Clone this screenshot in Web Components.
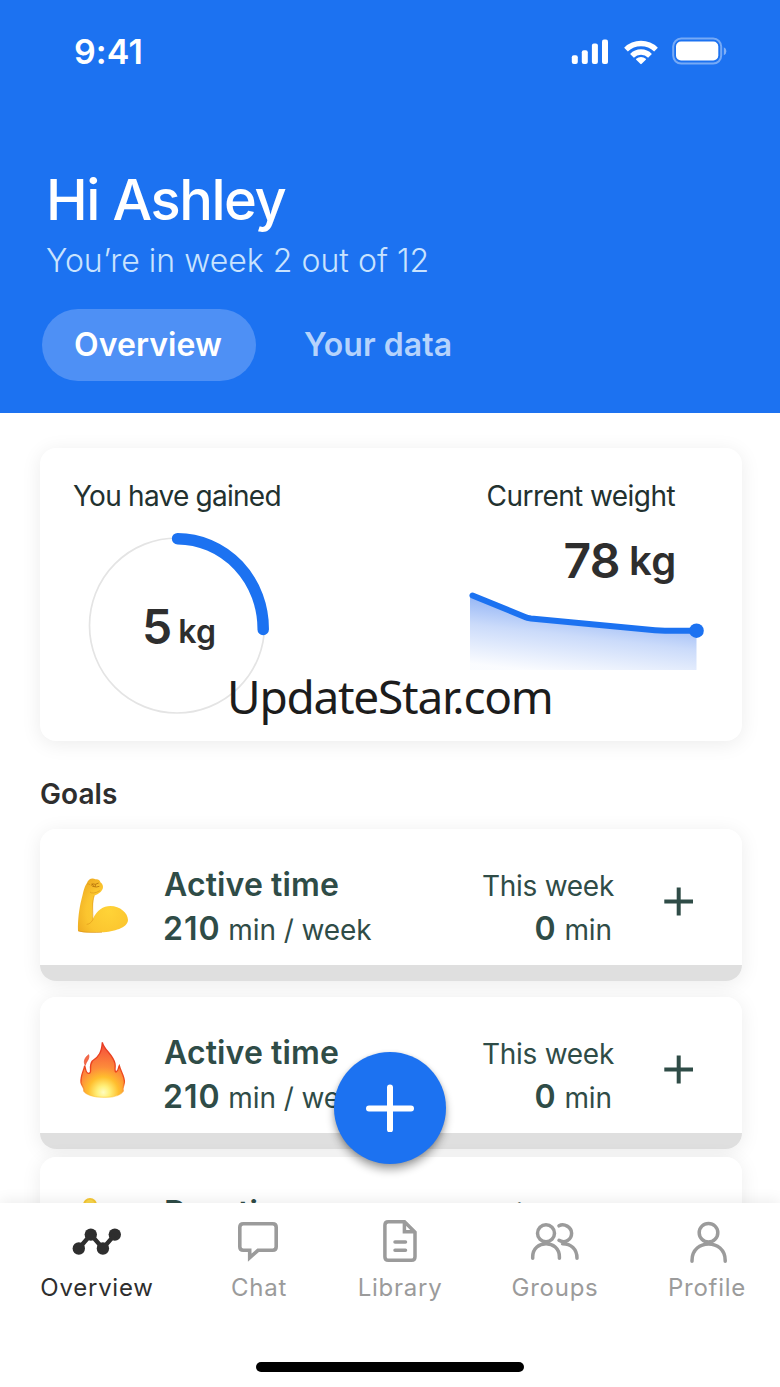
<!DOCTYPE html>
<html lang="en">
<head>
<meta charset="utf-8">
<title>Overview</title>
<style>
  html, body { margin: 0; background: #fff; }
  body { font-family: Inter, "Liberation Sans", sans-serif; overflow: hidden; }
</style>
</head>
<body>
<app-shell>
  <app-header slot="header" name="Hi Ashley" note="You’re in week 2 out of 12">
    <status-bar slot="status" time="9:41"></status-bar>
    <pill-tab active>Overview</pill-tab>
    <pill-tab>Your data</pill-tab>
  </app-header>
  <summary-card>
    <progress-ring slot="left" label="You have gained" value="5" unit="kg"></progress-ring>
    <weight-trend slot="right" label="Current weight" value="78" unit="kg"></weight-trend>
    <span slot="mark">UpdateStar.com</span>
  </summary-card>
  <goal-list heading="Goals">
    <goal-card name="Active time"><emoji-icon slot="icon" kind="arm"></emoji-icon></goal-card>
    <goal-card name="Active time"><emoji-icon slot="icon" kind="fire"></emoji-icon></goal-card>
    <goal-card name="Duration" class="tight"><emoji-icon slot="icon" kind="ball"></emoji-icon></goal-card>
  </goal-list>
  <add-button slot="float"></add-button>
  <nav-bar slot="nav">
    <nav-item icon="overview" active>Overview</nav-item>
    <nav-item icon="chat">Chat</nav-item>
    <nav-item icon="library">Library</nav-item>
    <nav-item icon="groups">Groups</nav-item>
    <nav-item icon="profile">Profile</nav-item>
  </nav-bar>
</app-shell>

<script>
const define = (tag, render) => customElements.define(tag, class extends HTMLElement {
  constructor() {
    super();
    this.attachShadow({ mode: 'open' });
  }
  connectedCallback() {
    this.shadowRoot.innerHTML = render(name => this.getAttribute(name) || '');
  }
});

define('app-shell', () => `
<style>
  :host { display: grid; grid-template-rows: 413px minmax(0, 1fr) 184px; width: 780px; height: 1387px; position: relative; overflow: hidden; background: #fff; }
  main { overflow: hidden; padding: 35px 38px 0 40px; }
  ::slotted([slot=float]) { position: absolute; left: 334px; top: 1051.5px; z-index: 3; }
</style>
<slot name="header"></slot>
<main><slot></slot></main>
<slot name="nav"></slot>
<slot name="float"></slot>`);

define('app-header', a => `
<style>
  :host { display: flex; flex-direction: column; background: #1c72f1; color: #fff; }
  h1 { margin: 63px 0 0 46px; font: 500 56px/68px Inter, sans-serif; letter-spacing: -1.44px; }
  p { margin: 7px 0 0 46px; font-size: 32px; font-weight: 300; line-height: 40px; color: #c9e3fe; letter-spacing: .02px; white-space: nowrap; }
  nav { display: flex; gap: 16px; margin: 28px 0 0 42px; }
</style>
<slot name="status"></slot>
<h1>${a('name')}</h1>
<p>${a('note')}</p>
<nav><slot></slot></nav>`);

define('status-bar', a => `
<style>
  :host { display: flex; justify-content: space-between; align-items: flex-start; height: 103px; box-sizing: border-box; padding: 32px 52px 0 74px; }
  time { font-size: 34px; font-weight: 600; line-height: 40px; letter-spacing: .1px; }
  svg { display: block; margin-top: 3px; }
</style>
<time>${a('time')}</time>
<svg width="158" height="32" viewBox="0 0 158 32" fill="#fff">
  <rect x="1.800" y="20.200" width="6" height="8.800" rx="2"/>
  <rect x="11.800" y="15.200" width="6" height="13.800" rx="2"/>
  <rect x="21.900" y="8.400" width="6" height="20.600" rx="2"/>
  <rect x="32" y="4.400" width="6" height="24.600" rx="2"/>
  <g fill="none" stroke="#fff" stroke-width="5.300">
    <path d="M56 14.600A21.500 21.500 0 0 1 86 14.600"/>
    <path d="M62 20.800A12.600 12.600 0 0 1 80 20.800"/>
  </g>
  <path d="M66.200 23.700a7.400 7.400 0 0 1 9.600 0q.5.5 0 1.100l-4.100 4q-.7.700-1.400 0l-4.100-4q-.5-.6 0-1.100Z"/>
  <rect x="103.200" y="3.600" width="48" height="25" rx="8" fill="none" stroke="#fff" stroke-opacity=".4" stroke-width="2"/>
  <rect x="106" y="6.500" width="42.300" height="18.900" rx="5"/>
  <path d="M153.800 12.200v8q2.600-1.200 2.600-4t-2.600-4Z" opacity=".45"/>
</svg>`);

define('pill-tab', () => `
<style>
  :host { display: block; height: 72px; border-radius: 36px; padding: 0 32px; font-size: 32px; font-weight: 600; line-height: 72px; white-space: nowrap; color: #b5d3fc; letter-spacing: .06px; box-sizing: border-box; min-width: 214px; }
  :host([active]) { background: #4e90f5; color: #fff; }
</style>
<slot></slot>`);

define('summary-card', () => `
<style>
  :host { display: flex; justify-content: space-between; position: relative; height: 293px; box-sizing: border-box; padding: 30px 35px 0 33px; border-radius: 16px; background: #fff; box-shadow: 0 3px 20px rgba(0,0,0,.08); }
  ::slotted([slot=mark]) { position: absolute; left: 187px; top: 218px; font: 400 46px/60px "Noto Sans", sans-serif; letter-spacing: -1.25px; color: #1c1c1c; white-space: nowrap; }
</style>
<slot name="left"></slot>
<slot name="right"></slot>
<slot name="mark"></slot>`);

define('progress-ring', a => `
<style>
  :host { display: block; color: #2e2e2e; }
  .label { font-size: 28px; line-height: 36px; letter-spacing: -.75px; color: #22312f; white-space: nowrap; }
  .ring { display: grid; margin: 18px 0 0 11px; width: 190px; height: 190px; }
  svg, .num { grid-area: 1 / 1; }
  .num { margin: 65px 0 0 58px; font-size: 48px; line-height: 60px; font-weight: 600; white-space: nowrap; }
  small { font-size: 32px; line-height: 40px; margin-left: 6px; letter-spacing: .4px; vertical-align: 1px; }
</style>
<div class="label">${a('label')}</div>
<div class="ring">
  <svg width="190" height="190" viewBox="0 0 190 190" fill="none">
    <circle cx="93" cy="93.500" r="87.500" stroke="#e4e4e4" stroke-width="1.700"/>
    <path d="M93.600 6.700A86 90 0 0 1 179.200 97.500" stroke="#1c72f1" stroke-width="11.500" stroke-linecap="round"/>
  </svg>
  <div class="num">${a('value')}<small>${a('unit')}</small></div>
</div>`);

define('weight-trend', a => `
<style>
  :host { display: flex; flex-direction: column; align-items: flex-end; width: 242px; color: #2e2e2e; }
  .label { font-size: 28px; line-height: 36px; letter-spacing: -.57px; margin-right: 32px; color: #22312f; white-space: nowrap; }
  .num { margin: 17px 30px 0 0; font-size: 48px; line-height: 60px; font-weight: 600; letter-spacing: -.6px; white-space: nowrap; }
  small { font-size: 40px; line-height: 40px; margin-left: 9px; letter-spacing: .6px; vertical-align: 3px; }
  svg { display: block; margin-top: -3px; }
</style>
<div class="label">${a('label')}</div>
<div class="num">${a('value')}<small>${a('unit')}</small></div>
<svg width="242" height="87" viewBox="0 0 242 87">
  <defs><linearGradient id="g" gradientUnits="userSpaceOnUse" x1="105" y1="8" x2="96" y2="86">
    <stop offset="0" stop-color="#1c62ea" stop-opacity=".56"/>
    <stop offset=".5" stop-color="#1c62ea" stop-opacity=".23"/>
    <stop offset="1" stop-color="#1c62ea" stop-opacity=".02"/>
  </linearGradient></defs>
  <path d="M5 7.500L63 30.500L196 42.500H231.500V82H5Z" fill="url(#g)"/>
  <path d="M7.500 7.500L60 29Q62 30 66 30.500L190 42.300Q196 42.800 202 42.700H231" fill="none" stroke="#1c72f1" stroke-width="6" stroke-linecap="round"/>
  <circle cx="231.500" cy="42.700" r="7.300" fill="#1c72f1"/>
</svg>`);

define('goal-list', a => `
<style>
  :host { display: flex; flex-direction: column; }
  h2 { margin: 35px 0 17px; font-size: 28px; line-height: 36px; font-weight: 600; letter-spacing: .07px; color: #2e2e2e; }
  .rows { display: flex; flex-direction: column; gap: 16px; }
  ::slotted(.tight) { margin-top: -8px; }
</style>
<h2>${a('heading')}</h2>
<div class="rows"><slot></slot></div>`);

define('goal-card', a => `
<style>
  :host { display: grid; grid-template-columns: 94px 1fr auto 30px; height: 152px; flex: none; box-sizing: border-box; padding: 36px 48px 0 30px; border-radius: 16px; background: linear-gradient(#fff 136px, #dfdfdf 136px); box-shadow: 0 3px 20px rgba(0,0,0,.08); color: #2f4c47; white-space: nowrap; }
  .name { margin-left: 1px; font-size: 32px; font-weight: 600; line-height: 40px; letter-spacing: .12px; }
  .amount { margin-top: 2px; font-size: 28px; line-height: 44px; letter-spacing: -.1px; }
  b { font-size: 32px; font-weight: 600; letter-spacing: 1px; }
  .info { margin-left: -1px; }
  .week { text-align: right; margin-right: 50px; }
  .title { font-size: 28px; line-height: 40px; letter-spacing: -.27px; padding-top: 1px; }
  .week .amount { margin: 1px 2px 0 0; }
  .plus { margin-top: 21px; }
  .icon { margin-top: 5px; }
</style>
<div class="icon"><slot name="icon"></slot></div>
<div class="info"><div class="name">${a('name')}</div><div class="amount"><b>210</b> min / week</div></div>
<div class="week"><div class="title">This week</div><div class="amount"><b>0</b> min</div></div>
<svg class="plus" width="30" height="30" viewBox="0 0 30 30" stroke="#2f4c47" stroke-width="4" fill="none"><path d="M.3 15.500H29M14.700 1.500V29.500"/></svg>`);

const EMOJI = {
  arm: `<defs><radialGradient id="a" cx=".62" cy=".6" r=".7"><stop offset="0" stop-color="#ffd337"/><stop offset=".65" stop-color="#fbc52f"/><stop offset="1" stop-color="#efad22"/></radialGradient></defs>
    <path d="M24 183C23 150 28 112 34 90C39 72 42 50 50 41C54 26 68 22 76 28C86 27 91 32 91 37C100 42 101 55 96 60C92 68 80 75 73 77C68 92 68 122 69 146C80 121 100 108 121 108C150 108 174 129 174 150C173 174 132 185 95 187C62 188 38 189 24 183Z" fill="url(#a)"/>
    <path d="M73 77C65 96 69 125 69 148C65 158 56 163 50 163M25 183C45 188 75 188 96 187" fill="none" stroke="#d78b13" stroke-width="2.500" opacity=".6"/>
    <path d="M63 46q7-7 13-3l10-4M67 49l12 2 9-2M66 40l5 9M77 43l-2 8" fill="none" stroke="#b6720c" stroke-width="2.500"/>
    <path d="M50 42q6-2 11 3M60 66q8 8 30-4" fill="none" stroke="#cf8b15" stroke-width="2.500" opacity=".6"/>`,
  fire: `<defs><radialGradient id="f" gradientUnits="userSpaceOnUse" cx="97" cy="172" r="135"><stop offset="0" stop-color="#fffcc0"/><stop offset=".14" stop-color="#fff07a"/><stop offset=".34" stop-color="#ffbe2e"/><stop offset=".56" stop-color="#fd8b3a"/><stop offset="1" stop-color="#f5553b"/></radialGradient><linearGradient id="r" x1="0" x2="0" y1="0" y2="1"><stop offset="0" stop-color="#e63b22"/><stop offset=".7" stop-color="#ee4a1d"/><stop offset="1" stop-color="#ffc933" stop-opacity=".5"/></linearGradient></defs>
    <path d="M94 22C98 44 126 58 132 86C134 98 129 110 135 111C143 109 141 98 145 92C148 108 162 124 160 143C158 156 154 158 157 168C150 180 128 188 98 187C68 187 46 180 38 168C42 162 32 153 30 143C28 120 40 104 41 92C45 103 43 116 54 115C66 112 51 96 64 78C84 66 92 51 94 22Z" fill="url(#f)" stroke="url(#r)" stroke-width="4"/>
    <path d="M53 59C57 72 45 80 43 91C36 79 42 67 53 59Z" fill="#f46b45" stroke="#e94a30" stroke-width="2"/>`,
  ball: `<circle cx="60" cy="21" r="21" fill="#f6c834"/><circle cx="60" cy="19" r="14" fill="#fbd84d"/>`
};
define('emoji-icon', a => `
<style>
  :host { display: block; width: 64px; height: 70px; }
  :host([kind=fire]) { margin: -3px 0 0 1px; }
  svg { display: block; overflow: visible; }
</style>
<svg width="64" height="70" viewBox="0 0 192 210">${EMOJI[a('kind')]}</svg>`);

define('add-button', () => `
<style>
  :host { display: grid; place-items: center; width: 112px; height: 112px; border-radius: 50%; background: #1c72f1; box-shadow: 0 6px 9px rgba(0,0,0,.32), 0 1px 4px rgba(0,0,0,.14); }
</style>
<svg width="48" height="48" viewBox="0 0 48 48" stroke="#fff" stroke-width="6" stroke-linecap="round"><path d="M3 24.500H45M24 3.500V45.500"/></svg>`);

define('nav-bar', () => `
<style>
  :host { display: flex; flex-direction: column; justify-content: space-between; position: relative; z-index: 2; background: #fff; box-shadow: 0 -2px 14px rgba(0,0,0,.08); box-sizing: border-box; padding: 15px 0; }
  .items { display: grid; grid-template-columns: 162px 162px 120px 190px 114px; margin-left: 16px; }
  .home { width: 268px; height: 10.500px; border-radius: 6px; background: #000; align-self: center; }
</style>
<div class="items"><slot></slot></div>
<div class="home"></div>`);

const NAV = {
  overview: `<g fill="currentColor" stroke="none"><circle cx="9.800" cy="30.500" r="6.200"/><circle cx="21.800" cy="16.600" r="6.200"/><circle cx="33.900" cy="30.500" r="6.200"/><circle cx="45.800" cy="16.600" r="6.200"/></g><path d="M9.800 30.500L21.800 16.600L33.900 30.500L45.800 16.600" stroke-width="4.400"/>`,
  chat: `<path d="M12.300 5.700H41.700Q45.200 5.700 45.200 9.200V28.800Q45.200 32.300 41.700 32.300H27L18.700 39.700V32.300H12.300Q8.800 32.300 8.800 28.800V9.200Q8.800 5.700 12.300 5.700Z" stroke-width="3.600"/>`,
  library: `<path d="M16.300 3.800H32.500L43 14.300V38.700Q43 42.300 39.500 42.300H16.300Q12.900 42.300 12.900 38.700V7.300Q12.900 3.800 16.300 3.800ZM32.400 4V13.800H43"/><path d="M23 24H33.500M23 32.300H33.500" stroke-linecap="round"/>`,
  groups: `<g stroke-linecap="round"><circle cx="19" cy="15.200" r="8.500"/><path d="M5.700 40.200V38.800C5.700 21.400 32.400 21.400 32.400 38.800V40.200"/><path d="M32 7.800C37 5 44.600 9 44.600 15.200C44.600 21.500 38 26 32 22.300M35.500 25.700C44 25.700 50 31 50 40.200"/></g>`,
  profile: `<g stroke-linecap="round"><circle cx="29.500" cy="14.700" r="9.300"/><path d="M13 43.200V42.400C13 20.400 46.200 20.400 46.200 42.400V43.200"/></g>`
};
define('nav-item', a => `
<style>
  :host { display: flex; flex-direction: column; align-items: center; gap: 6px; color: #9b9b9b; font-size: 24px; line-height: 32px; letter-spacing: .75px; white-space: nowrap; justify-self: center; }
  :host([active]) { color: #2e2e2e; }
  svg { display: block; }
</style>
<svg width="56" height="48" viewBox="0 0 56 48" fill="none" stroke="currentColor" stroke-width="3.500">${NAV[a('icon')]}</svg>
<span><slot></slot></span>`);
</script>
</body>
</html>
